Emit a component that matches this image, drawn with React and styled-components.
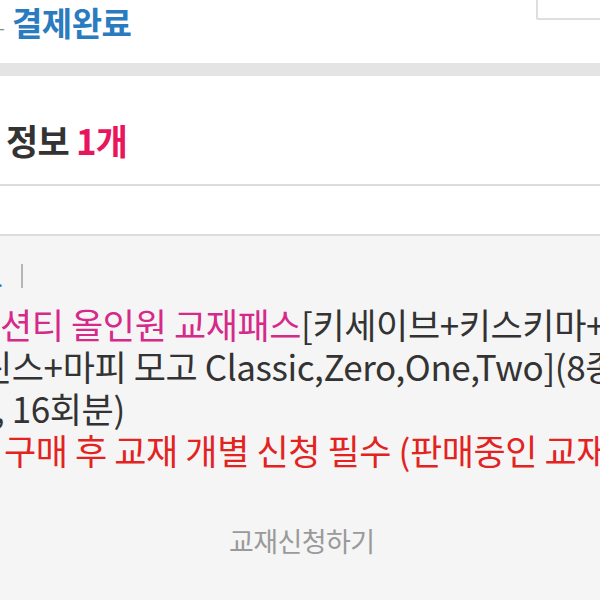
import styled, { createGlobalStyle } from "styled-components";

const GlobalStyle = createGlobalStyle`
  html, body {
    margin: 0;
    padding: 0;
    background: #f5f5f5;
    font-family: "Noto Sans CJK KR", "Noto Sans", sans-serif;
    overflow: hidden;
  }
`;

export default function App() {
  return (
    <>
      <GlobalStyle />
      <Page>
        <Header>
          <Steps>
            <PrevStep>ㅡ</PrevStep>
            <Title>결제완료</Title>
          </Steps>
          <TopBox />
        </Header>
        <Band />

        <Section $height={108}>
          <Heading>
            정보 <Count>1개</Count>
          </Heading>
        </Section>
        <Section $height={48} />

        <Order>
          <Meta>
            <MetaLink>.</MetaLink>
            <Divider />
          </Meta>

          <ProductText>
            <Line $shift={0}>
              <Brand>션티 올인원 교재패스</Brand>[키세이브+키스키마+키린스
            </Line>
            <Line $shift={-20}>린스+마피 모고 Classic,Zero,One,Two](8종</Line>
            <Line $shift={-5}>, 16회분)</Line>
            <Line $shift={-38} $warn>
              ※ 구매 후 교재 개별 신청 필수 (판매중인 교재만 신청 가능)
            </Line>
          </ProductText>

          <ApplyButton>교재신청하기</ApplyButton>
        </Order>
      </Page>
    </>
  );
}

const Page = styled.div`
  width: 600px;
  height: 600px;
  overflow: hidden;
  display: flex;
  flex-direction: column;
`;

const Header = styled.header`
  height: 63px;
  background: #fff;
  display: flex;
  justify-content: space-between;
  align-items: flex-start;
`;

const Steps = styled.div`
  display: flex;
  align-items: center;
  gap: 7px;
  height: 44px;
  overflow: hidden;
`;

const PrevStep = styled.span`
  width: 5px;
  overflow: hidden;
  direction: rtl;
  font-size: 18px;
  color: #8a8a8a;
  margin-top: 14px;
`;

const Title = styled.h1`
  margin: 0;
  font-size: 33px;
  line-height: 44px;
  font-weight: 700;
  color: #2a7bbf;
  letter-spacing: -0.5px;
`;

const TopBox = styled.div`
  width: 80px;
  height: 40px;
  margin-top: -24px;
  margin-right: -20px;
  border: 2px solid #dedede;
  border-radius: 2px;
  background: #fff;
`;

const Band = styled.div`
  height: 13px;
  background: #e4e4e4;
`;

const Section = styled.section`
  height: ${(p) => p.$height}px;
  background: #fff;
  border-bottom: 2px solid #dcdcdc;
  display: flex;
  align-items: center;
  padding-left: 6px;
`;

const Heading = styled.h2`
  margin: 20px 0 0;
  font-size: 35px;
  line-height: 42px;
  font-weight: 700;
  color: #333;
  letter-spacing: -0.8px;
`;

const Count = styled.span`
  color: #e8175d;
`;

const Order = styled.div`
  flex: 1;
  background: #f5f5f5;
  padding-top: 28px;
  display: flex;
  flex-direction: column;
`;

const Meta = styled.div`
  display: flex;
  align-items: center;
  height: 24px;
  gap: 18px;
`;

const MetaLink = styled.span`
  width: 3px;
  overflow: hidden;
  direction: rtl;
  font-size: 20px;
  line-height: 24px;
  color: #3b82c4;
  margin-top: 6px;
`;

const Divider = styled.span`
  width: 2px;
  height: 24px;
  background: #b5b5b5;
`;

const ProductText = styled.div`
  margin-top: 15px;
  display: flex;
  flex-direction: column;
`;

const Line = styled.div`
  white-space: nowrap;
  margin-left: ${(p) => p.$shift}px;
  font-size: 35px;
  line-height: 42px;
  letter-spacing: -0.4px;
  color: ${(p) => (p.$warn ? "#e2231f" : "#333")};
`;

const Brand = styled.span`
  color: #d52a8a;
`;

const ApplyButton = styled.button`
  align-self: flex-start;
  margin: 54px 0 0 229px;
  padding: 0;
  border: none;
  background: none;
  font-family: inherit;
  font-size: 27px;
  line-height: 32px;
  letter-spacing: -0.6px;
  color: #9a9a9a;
`;
